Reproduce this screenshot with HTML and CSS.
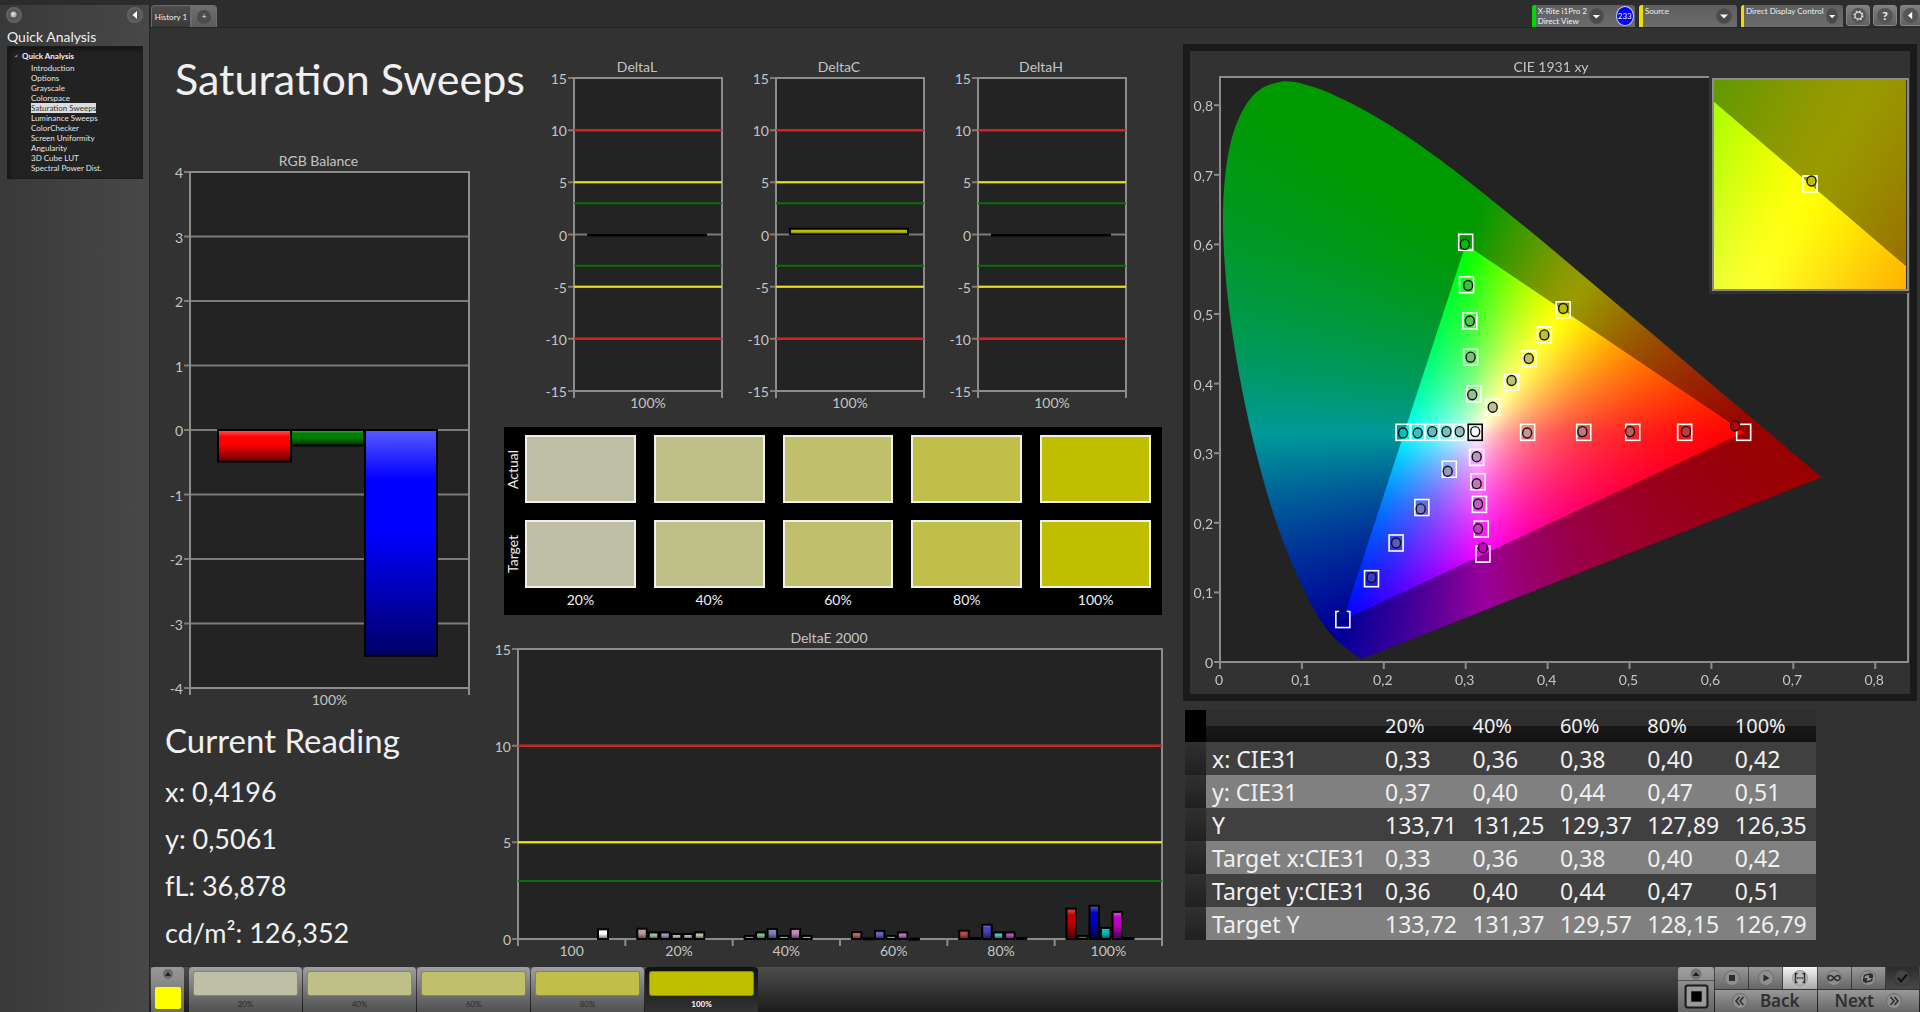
FILE: index.html
```html
<!DOCTYPE html>
<html lang="en">
<head>
<meta charset="utf-8">
<title>Saturation Sweeps</title>
<link rel="stylesheet" href="styles.css">
</head>
<body>
<div class="app">
  <aside class="sidebar">
    <div class="sidebar-tools">
      <button class="knob" aria-label="Pin panel"><svg viewBox="0 0 16 16"><circle cx="7.5" cy="7.5" r="3" fill="#b4b4b4"/><circle cx="7" cy="7" r="1.5" fill="#e0e0e0"/></svg></button>
      <button class="knob" aria-label="Collapse panel"><svg viewBox="0 0 16 16"><path d="M10 4v8L5.500 8z" fill="#fff"/></svg></button>
    </div>
    <h2 class="sidebar-title">Quick Analysis</h2>
    <nav class="tree">
      <div class="tree-root"><svg class="tree-arrow" viewBox="0 0 6 6"><path d="M5 0v5H0z" fill="#777"/></svg>Quick Analysis</div>
      <ul>
        <li><a href="#introduction">Introduction</a></li>
        <li><a href="#options">Options</a></li>
        <li><a href="#grayscale">Grayscale</a></li>
        <li><a href="#colorspace">Colorspace</a></li>
        <li><a href="#saturation" class="current">Saturation Sweeps</a></li>
        <li><a href="#luminance">Luminance Sweeps</a></li>
        <li><a href="#checker">ColorChecker</a></li>
        <li><a href="#uniformity">Screen Uniformity</a></li>
        <li><a href="#angularity">Angularity</a></li>
        <li><a href="#lut">3D Cube LUT</a></li>
        <li><a href="#spectral">Spectral Power Dist.</a></li>
      </ul>
    </nav>
  </aside>

  <div class="main">
    <header class="topbar">
      <div class="tabs">
        <button class="tab">History 1</button>
        <button class="tab tab-add" aria-label="Add history"><span>+</span></button>
      </div>
      <div class="devices">
        <div class="device device-meter">
          <span class="status status-ok"></span>
          <span class="device-name">X-Rite i1Pro 2<br>Direct View</span>
          <button class="knob knob-dark" aria-label="Meter menu"><svg viewBox="0 0 16 16"><path d="M4 6.500h8L8 10.500z" fill="#fff"/></svg></button>
          <span class="counter">233</span>
        </div>
        <div class="device device-source">
          <span class="status"></span>
          <span class="device-name">Source</span>
          <button class="knob knob-dark" aria-label="Source menu"><svg viewBox="0 0 16 16"><path d="M4 6.500h8L8 10.500z" fill="#fff"/></svg></button>
        </div>
        <div class="device device-display">
          <span class="status"></span>
          <span class="device-name">Direct Display Control</span>
          <button class="knob knob-dark" aria-label="Display menu"><svg viewBox="0 0 16 16"><path d="M4 6.500h8L8 10.500z" fill="#fff"/></svg></button>
        </div>
        <button class="tool" aria-label="Settings"><svg viewBox="0 0 20 20"><circle cx="10" cy="10" r="9" fill="#555"/><circle cx="10" cy="10" r="4" fill="none" stroke="#ddd" stroke-width="1.300"/><circle cx="10" cy="10" r="5.200" fill="none" stroke="#ddd" stroke-width="1.600" stroke-dasharray="2 2.080"/></svg></button>
        <button class="tool tool-help" aria-label="Help"><span>?</span></button>
        <button class="tool" aria-label="Back"><svg viewBox="0 0 20 20"><circle cx="10" cy="10" r="9" fill="#555"/><path d="M12 5.500v9L7 10z" fill="#fff"/></svg></button>
      </div>
    </header>

    <main class="content">
      <section class="col-left">
        <h1>Saturation Sweeps</h1>
        <svg class="chart" id="rgb" viewBox="0 0 340 570" role="img" aria-label="RGB Balance"></svg>
        <div class="reading">
          <h2>Current Reading</h2>
          <p>x: 0,4196</p>
          <p>y: 0,5061</p>
          <p>fL: 36,878</p>
          <p>cd/m²: 126,352</p>
        </div>
      </section>

      <section class="col-mid">
        <div class="deltas">
          <svg class="chart" id="deltaL" viewBox="0 0 202 372" role="img" aria-label="DeltaL"></svg>
          <svg class="chart" id="deltaC" viewBox="0 0 202 372" role="img" aria-label="DeltaC"></svg>
          <svg class="chart" id="deltaH" viewBox="0 0 202 372" role="img" aria-label="DeltaH"></svg>
        </div>
        <div class="swatches">
          <div class="swatch-row">
            <span class="swatch-label">Actual</span>
            <div class="swatch-cells"><i class="s20"></i><i class="s40"></i><i class="s60"></i><i class="s80"></i><i class="s100"></i></div>
          </div>
          <div class="swatch-row">
            <span class="swatch-label">Target</span>
            <div class="swatch-cells"><i class="s20"></i><i class="s40"></i><i class="s60"></i><i class="s80"></i><i class="s100"></i></div>
          </div>
          <div class="swatch-names"><span>20%</span><span>40%</span><span>60%</span><span>80%</span><span>100%</span></div>
        </div>
        <svg class="chart" id="deltaE" viewBox="0 0 673 352" role="img" aria-label="DeltaE 2000"></svg>
      </section>

      <section class="col-right">
        <div class="cie">
          <canvas id="gamut" width="720" height="643"></canvas>
          <svg class="chart" id="cie" viewBox="0 0 720 643" role="img" aria-label="CIE 1931 xy"></svg>
        </div>
        <table class="data">
          <colgroup><col class="c-pick"><col class="c-name"><col><col><col><col><col></colgroup>
          <thead><tr><th></th><th></th><th>20%</th><th>40%</th><th>60%</th><th>80%</th><th>100%</th></tr></thead>
          <tbody>
            <tr><td></td><th>x: CIE31</th><td>0,33</td><td>0,36</td><td>0,38</td><td>0,40</td><td>0,42</td></tr>
            <tr><td></td><th>y: CIE31</th><td>0,37</td><td>0,40</td><td>0,44</td><td>0,47</td><td>0,51</td></tr>
            <tr><td></td><th>Y</th><td>133,71</td><td>131,25</td><td>129,37</td><td>127,89</td><td>126,35</td></tr>
            <tr><td></td><th>Target x:CIE31</th><td>0,33</td><td>0,36</td><td>0,38</td><td>0,40</td><td>0,42</td></tr>
            <tr><td></td><th>Target y:CIE31</th><td>0,36</td><td>0,40</td><td>0,44</td><td>0,47</td><td>0,51</td></tr>
            <tr><td></td><th>Target Y</th><td>133,72</td><td>131,37</td><td>129,57</td><td>128,15</td><td>126,79</td></tr>
          </tbody>
        </table>
      </section>
    </main>

    <footer class="bottombar">
      <button class="picker" aria-label="Pattern colour">
        <svg viewBox="0 0 12 12"><circle cx="6" cy="6" r="5" fill="#6a6a6a"/><path d="M3 8h6L6 4z" fill="#222"/></svg>
        <span class="picker-color"></span>
      </button>
      <div class="steps">
        <button class="step"><i class="s20"></i><span>20%</span></button>
        <button class="step"><i class="s40"></i><span>40%</span></button>
        <button class="step"><i class="s60"></i><span>60%</span></button>
        <button class="step"><i class="s80"></i><span>80%</span></button>
        <button class="step step-active"><i class="s100"></i><span>100%</span></button>
      </div>
      <div class="transport">
        <div class="pattern">
          <button class="pattern-up" aria-label="Show patterns"><svg viewBox="0 0 14 12"><circle cx="7" cy="6" r="5.500" fill="#747474"/><path d="M3.500 8h7L7 4z" fill="#222"/></svg></button>
          <button class="pattern-window" aria-label="Pattern window"><svg viewBox="0 0 24 24"><rect x="1.500" y="1.500" width="21" height="21" rx="2" fill="#999" stroke="#1c1c1c" stroke-width="2"/><path d="M7 7h10v10H7z" fill="#000"/></svg></button>
        </div>
        <div class="controls">
          <div class="control-row">
            <button aria-label="Stop"><svg viewBox="0 0 16 16"><circle cx="8" cy="8" r="7.500"/><path d="M5 5h6v6H5z"/></svg></button>
            <button aria-label="Play"><svg viewBox="0 0 16 16"><circle cx="8" cy="8" r="7.500"/><path d="M5.500 4.500v7l6-3.500z"/></svg></button>
            <button class="lit" aria-label="Measure series"><svg viewBox="0 0 16 16"><circle cx="8" cy="8" r="7.500"/><path class="line" d="M5.500 3.500h-2v9h2M10.500 3.500h2v9h-2M5 8h1.500M7.300 8h1.400M9.500 8H11"/></svg></button>
            <button aria-label="Continuous"><svg viewBox="0 0 16 16"><circle cx="8" cy="8" r="7.500"/><path class="line" d="M8 8C6.500 6 5.500 5.500 4.500 5.500a2.500 2.500 0 0 0 0 5C5.500 10.500 6.500 10 8 8s2.500-2.500 3.500-2.500a2.500 2.500 0 0 1 0 5C10.500 10.500 9.500 10 8 8z"/></svg></button>
            <button aria-label="Repeat"><svg viewBox="0 0 16 16"><circle cx="8" cy="8" r="7.500"/><path class="line" d="M4 7.500C4 5.500 5.500 4.500 8 4.500h2.500M12 8.500c0 2-1.500 3-4 3H5.500"/><path d="M9.500 2.500 13 4.500v3.500H9zM6.500 13.500 3 11.500V8h4z"/></svg></button>
            <button class="dim" aria-label="Accept"><svg viewBox="0 0 16 16"><circle cx="8" cy="8" r="7.500"/><path class="check" d="M4 8l3 3.500 6-7"/></svg></button>
          </div>
          <div class="control-row nav-row">
            <button><svg viewBox="0 0 16 16"><circle cx="8" cy="8" r="7.500"/><path class="line" d="M7.500 4l-3.500 4 3.500 4M11.500 4L8 8l3.500 4"/></svg>Back</button>
            <button>Next<svg viewBox="0 0 16 16"><circle cx="8" cy="8" r="7.500"/><path class="line" d="M4.500 4L8 8l-3.500 4M8.500 4L12 8l-3.500 4"/></svg></button>
          </div>
        </div>
      </div>
    </footer>
  </div>
</div>
<script src="charts.js"></script>
</body>
</html>
```
FILE: styles.css
```css
* { box-sizing: border-box; }
body {
  margin: 0;
  background: #323232;
  color: #f0f0f0;
  font-family: Lato, "Noto Sans", sans-serif;
  font-size: 14px;
}
button {
  margin: 0;
  padding: 0;
  border: 0;
  background: none;
  color: inherit;
  font: inherit;
}
h1, h2, p, ul { margin: 0; padding: 0; font-weight: 400; }

.app {
  display: grid;
  grid-template-columns: 150px minmax(0, 1fr);
  min-height: 100vh;
}

/* Sidebar */
.sidebar {
  border-top: 5px solid #2c2c2c;
  border-right: 1px solid #252525;
  background: linear-gradient(90deg, #393939, #484848);
}
.sidebar-tools {
  display: flex;
  justify-content: space-between;
  padding: 2px 6px 0;
}
.knob {
  width: 16px;
  height: 16px;
  border-radius: 50%;
  background: radial-gradient(#555 40%, #777);
}
.knob svg { display: block; }
.knob-dark { background: radial-gradient(#4a4a4a 50%, #606060); }
.sidebar-title {
  padding: 5px 7px 0;
  font-size: 14px;
  line-height: 18px;
}
.tree {
  margin: 0 6px 0 7px;
  padding: 4px 0 5px;
  border: 1px solid #1b1b1b;
  background: #222;
  box-shadow: inset 2px 3px 4px #161616;
  font-size: 8px;
  line-height: 10px;
}
.tree-root {
  display: flex;
  align-items: center;
  gap: 4px;
  padding-left: 6px;
  margin-bottom: 2px;
  font-weight: 700;
}
.tree-arrow { width: 4px; height: 4px; }
.tree ul { padding-left: 23px; list-style: none; }
.tree li { height: 10px; }
.tree a { display: inline-block; color: #e4e4e4; text-decoration: none; }
.tree a.current { background: #ddd; color: #333; }

/* Top bar */
.main { display: flex; flex-direction: column; min-width: 0; }
.topbar {
  display: flex;
  justify-content: space-between;
  height: 27px;
  padding: 5px 0 0 1px;
  background: #2d2d2d;
}
.tabs { display: flex; }
.tab {
  width: 40px;
  border: 1px solid #6c6c6c;
  border-bottom: 0;
  border-radius: 4px 0 0 0;
  background: linear-gradient(#4d4d4d, #3a3a3a);
  font-size: 8px;
  white-space: nowrap;
}
.tab-add {
  width: 26px;
  border-radius: 0 4px 0 0;
  background: linear-gradient(#707070, #5c5c5c);
}
.tab-add span {
  display: inline-block;
  width: 14px;
  height: 14px;
  border-radius: 50%;
  background: #4c4c4c;
  line-height: 13px;
}
.devices { display: flex; gap: 3px; }
.device {
  display: flex;
  align-items: center;
  gap: 2px;
  padding-right: 5px;
  border-radius: 3px 3px 0 0;
  background: linear-gradient(#5e5e5e, #6c6c6c);
  font-size: 8px;
  line-height: 10px;
  white-space: nowrap;
}
.device-name { align-self: flex-start; flex: 1; padding-top: 1px; }
.device-meter { width: 103px; padding-right: 1px; margin-right: 1px; }
.device-source { width: 98px; margin-right: 1px; }
.device-display { width: 102px; }
.status { align-self: stretch; width: 4px; border-radius: 3px 0 0 0; background: #e8e000; }
.status-ok { background: #00d800; }
.counter {
  width: 20px;
  height: 20px;
  margin-left: 10px;
  border: 1px solid #c8c8ff;
  border-radius: 50%;
  background: #00f;
  line-height: 18px;
  text-align: center;
}
.tool {
  width: 24px;
  height: 21px;
  border: 1px solid #858585;
  border-radius: 3px;
  background: linear-gradient(#808080, #606060);
}
.tool svg { display: block; width: 17px; margin: auto; }
.tool span { display: block; width: 16px; height: 16px; margin: auto; border-radius: 50%; background: #555; font-size: 12px; font-weight: 900; line-height: 16px; }
.tool:last-child { width: 20px; border-right: 0; border-radius: 3px 0 0 3px; }

/* Content */
.content {
  flex: 1;
  display: grid;
  grid-template-columns: minmax(0, 340fr) minmax(0, 673fr) minmax(0, 754fr);
  padding-right: 3px;
  border-top: 1px solid #262626;
}
.chart { display: block; width: 100%; }
.chart text { fill: #c4c4c4; font-size: 14px; }
.axis { stroke: #8c8c8c; stroke-width: 2; fill: none; }
.grid { stroke: #7c7c7c; stroke-width: 2; }
.plot { fill: #232323; }

.col-left h1 {
  padding: 22px 0 0 25px;
  font-size: 43px;
  line-height: 58px;
  height: 122px;
  white-space: nowrap;
}
.reading { margin-top: -8px; padding-left: 15px; }
.reading h2 { font-size: 33px; line-height: 56px; white-space: nowrap; }
.reading p { font-size: 27px; line-height: 47px; }

.deltas {
  display: grid;
  grid-template-columns: repeat(3, 1fr);
  padding: 27px 23px 0 44px;
}
.swatches {
  margin: 0 1px 0 14px;
  padding: 8px 11px 0 0;
  background: #000;
}
.swatch-row { display: flex; height: 68px; margin-bottom: 17px; }
.swatch-label {
  width: 18px;
  margin-right: 3px;
  writing-mode: vertical-rl;
  transform: rotate(180deg);
  text-align: center;
  line-height: 18px;
}
.swatch-cells, .swatch-names { display: grid; grid-template-columns: repeat(5, 1fr); column-gap: 18px; }
.swatch-cells { flex: 1; }
.swatch-cells i { border: 2px solid #f0f0e8; }
.swatch-names { margin: -14px 0 0 21px; padding-bottom: 7px; text-align: center; line-height: 17px; }
.s20 { background: #bfbfa5; }
.s40 { background: #bfbf88; }
.s60 { background: #bfbf6c; }
.s80 { background: #bfbf4a; }
.s100 { background: #bfbf00; }

.col-right { padding: 16px 0 0 20px; }
.cie { display: grid; border: 7px solid #1a1a1a; background: #323232; }
.cie canvas, .cie svg { grid-area: 1 / 1; display: block; width: 100%; }
.data {
  width: 86%;
  margin: 9px 0 0 2px;
  border-collapse: collapse;
  table-layout: fixed;
  font-family: "Noto Sans", sans-serif;
  font-size: 23px;
}
.c-pick { width: 21px; }
.c-name { width: 173px; }
.data th, .data td { height: 33px; padding: 0 0 0 6px; font-weight: 400; text-align: left; line-height: 30px; white-space: nowrap; }
.data thead th { height: 32px; background: linear-gradient(#2e2e2e 50%, #191919 50%, #121212); font-size: 20px; }
.data thead th:first-child { background: #000; }
.data tbody tr { background: #404040; }
.data tbody tr:nth-child(even) { background: #808080; }
.data tbody td:first-child { background: linear-gradient(#303030, #202020); }

/* Bottom bar */
.bottombar {
  display: flex;
  height: 45px;
  padding-left: 1px;
  background: linear-gradient(#4c4c4c, #3a3a3a 40%, #1c1c1c);
}
.picker {
  display: flex;
  flex-direction: column;
  align-items: center;
  justify-content: space-between;
  width: 33px;
  margin-right: 5px;
  padding: 1px 0 3px;
  border-radius: 3px 3px 0 0;
  background: linear-gradient(#989898, #6c6c6c);
}
.picker svg { width: 12px; }
.picker-color { width: 26px; height: 22px; border-radius: 2px; background: #ff0; }
.steps { display: flex; gap: 1px; }
.step {
  display: flex;
  flex-direction: column;
  width: 113px;
  padding: 4px 4px 0;
  border-radius: 4px 4px 0 0;
  background: linear-gradient(#a0a0a0, #505050);
  color: #2a2a2a;
  font-size: 8px;
  line-height: 16px;
}
.step i { height: 27px; border: 1px solid rgba(60, 60, 0, .4); border-radius: 3px; }
.step-active { background: linear-gradient(#111, #333); color: #fff; font-weight: 700; }
.transport { display: flex; gap: 1px; margin-left: auto; padding-right: 1px; }
.pattern { display: flex; flex-direction: column; width: 36px; background: linear-gradient(#a0a0a0, #666); border-radius: 3px 3px 0 0; }
.pattern-up { height: 14px; border-bottom: 1px solid #555; }
.pattern-up svg { display: block; width: 14px; margin: auto; }
.pattern-window { flex: 1; }
.pattern-window svg { display: block; width: 25px; margin: auto; }
.controls { display: flex; flex-direction: column; gap: 1px; width: 204px; }
.control-row { display: grid; grid-template-columns: repeat(6, 1fr); gap: 1px; height: 22px; }
.control-row button {
  display: flex;
  align-items: center;
  justify-content: center;
  background: linear-gradient(#999, #666);
  color: #303030;
}
.control-row svg { width: 16px; height: 16px; fill: #2c2c2c; }
.control-row circle { fill: #8f8f8f; stroke: #6e6e6e; }
.control-row .line, .control-row .check { fill: none; stroke: #2c2c2c; stroke-width: 1.500px; }
.control-row .check { stroke: #111; stroke-width: 2px; }
.control-row .lit { background: linear-gradient(#f4f4f4, #aaa); }
.control-row .lit circle { fill: #bbb; stroke: #999; }
.control-row .dim { background: linear-gradient(#2c2c2c, #484848); }
.control-row .dim circle { fill: #444; stroke: #3a3a3a; }
.nav-row { grid-template-columns: 1fr 1fr; }
.control-row.nav-row button { gap: 12px; font: 600 17px/22px "Noto Sans", sans-serif; }
```
FILE: charts.js
```js
const NS = 'http://www.w3.org/2000/svg';

function add(parent, tag, attrs, text) {
  const el = document.createElementNS(NS, tag);
  for (const k in attrs) el.setAttribute(k, attrs[k]);
  if (text !== undefined) el.textContent = text;
  parent.appendChild(el);
  return el;
}

// Vertical sheen laid over every bar.
function addSheen(svg) {
  const g = add(add(svg, 'defs', {}), 'linearGradient', { id: svg.id + '-sheen', x1: 0, y1: 0, x2: 0, y2: 1 });
  [[0, '#fff', .35], [.22, '#fff', 0], [.45, '#000', 0], [1, '#000', .6]].forEach(([o, c, a]) =>
    add(g, 'stop', { offset: o, 'stop-color': c, 'stop-opacity': a }));
}

function chart(id, o) {
  const svg = document.getElementById(id);
  const { x, y, w, h } = o.plot;
  const sy = v => y + (o.max - v) / (o.max - o.min) * h;
  addSheen(svg);
  add(svg, 'rect', { class: 'plot', x, y, width: w, height: h });
  add(svg, 'text', { x: x + w / 2 - 11, y: y - 6, 'text-anchor': 'middle' }, o.title);
  for (let v = o.min; v <= o.max; v += o.step) {
    add(svg, 'line', { class: 'grid', x1: x - 6, x2: x + w, y1: sy(v), y2: sy(v) });
    add(svg, 'text', { x: x - 7, y: sy(v) + 6, 'text-anchor': 'end' }, v);
  }
  add(svg, 'rect', { class: 'axis', x, y, width: w, height: h });
  const cw = w / o.groups.length;
  o.groups.forEach((name, i) =>
    add(svg, 'text', { x: x + cw * (i + .5), y: y + h + 17, 'text-anchor': 'middle' }, name));
  for (let i = 0; i <= o.groups.length; i++)
    add(svg, 'line', { class: 'axis', x1: x + cw * i, x2: x + cw * i, y1: y + h, y2: y + h + 7 });
  (o.limits || []).forEach(([v, c]) =>
    add(svg, 'line', { x1: x, x2: x + w, y1: sy(v), y2: sy(v), stroke: c, 'stroke-width': 2 }));
  o.bars.forEach(([bx, bw, v, c]) => {
    const top = Math.min(sy(v), sy(0)), height = Math.max(Math.abs(sy(v) - sy(0)), 1);
    const box = { x: x + bx, y: top, width: bw, height };
    add(svg, 'rect', { ...box, fill: c });
    add(svg, 'rect', { ...box, fill: `url(#${id}-sheen)`, stroke: '#000', 'stroke-width': 2 });
  });
}

chart('rgb', {
  title: 'RGB Balance', plot: { x: 40, y: 22, w: 279, h: 516 }, min: -4, max: 4, step: 1, groups: ['100%'],
  bars: [[28, 73, -.49, '#f00'], [101, 73, -.24, '#008000'], [175, 72, -3.5, '#00f']]
});

const limits = [[10, '#d02020'], [5, '#e6e020'], [3, '#0a700a'], [-3, '#0a700a'], [-5, '#e6e020'], [-10, '#d02020']];
[['L', -.1, '#000'], ['C', .55, '#bfbf00'], ['H', -.1, '#000']].forEach(([k, v, c]) =>
  chart('delta' + k, {
    title: 'Delta' + k, plot: { x: 40, y: 23, w: 148, h: 313 }, min: -15, max: 15, step: 5, groups: ['100%'],
    limits, bars: [[14, 118, v, c]]
  }));

// Colour of a sweep step: full channels at 191, the others at the step's floor.
const floors = [165, 136, 108, 74, 0];
const sweep = (mask, i, low = floors[i]) => `rgb(${mask.map(m => m ? 191 : low).join()})`;
const hues = [[1, 0, 0], [0, 1, 0], [0, 0, 1], [0, 1, 1], [1, 0, 1], [1, 1, 0]];
const errors = [
  [.53, .34, .34, .26, .26, .34],
  [.16, .34, .52, .16, .52, .16],
  [.36, .04, .42, .16, .34, .02],
  [.43, .05, .74, .34, .34, .05],
  [1.57, .16, 1.72, .57, 1.4, .05]
];
const errorBars = [[80, 10, .5, '#fff']];
errors.forEach((row, g) => row.forEach((v, i) => {
  const low = [138, 112, 84, 54, 8][g];
  errorBars.push([(g + 1) * 107.3 + 12 + i * 11.5, 9.5, v, g < 4 && i < 3 ? sweep(hues[i], g, low + 14) : sweep(hues[i], g)]);
}));
chart('deltaE', {
  title: 'DeltaE 2000', plot: { x: 28, y: 34, w: 644, h: 290 }, min: 0, max: 15, step: 5,
  groups: ['100', '20%', '40%', '60%', '80%', '100%'],
  limits: [[10, '#f01010'], [5, '#f0f000'], [3, '#0a700a']], bars: errorBars
});

// CIE 1931 chromaticity diagram
const px = x => 30 + x * 819, py = y => 611 - y * 696;
const locus = [[.1741, .005], [.1714, .0051], [.1644, .0109], [.1566, .0177], [.144, .0297], [.1355, .0399], [.1241, .0578],
  [.1096, .0868], [.0913, .1327], [.0687, .2007], [.0454, .295], [.0235, .4127], [.0082, .5384], [.0039, .6548], [.0139, .7502],
  [.0389, .812], [.0743, .8338], [.1142, .8262], [.1547, .8059], [.1929, .7816], [.2296, .7543], [.2658, .7243], [.3016, .6923],
  [.3731, .6245], [.4441, .5547], [.5125, .4866], [.5752, .4242], [.627, .3725], [.6658, .334], [.6915, .3083], [.719, .2809], [.7347, .2653]];
const primaries = [[.64, .33], [.3, .6], [.15, .06]];

// Saturation ramps linearly; hue does too, but more softly between red and green.
function colorField(w, h, toXY, dim) {
  const c = document.createElement('canvas');
  c.width = w; c.height = h;
  const ctx = c.getContext('2d'), img = ctx.createImageData(w, h);
  for (let j = 0; j < h; j++) for (let i = 0; i < w; i++) {
    const [x, y] = toXY(i, j), z = 1 - x - y;
    const rgb = [3.2406 * x - 1.5372 * y - .4986 * z, -.9689 * x + 1.8758 * y + .0415 * z, .0557 * x - .204 * y + 1.057 * z]
      .map(v => Math.max(v, 0));
    const hi = Math.max(...rgb), lo = Math.min(...rgb), base = lo / hi, k = (j * w + i) * 4;
    const soft = rgb[2] === lo ? 1.6 : 1.1;
    for (let n = 0; n < 3; n++) {
      const t = hi > lo ? (rgb[n] - lo) / (hi - lo) : 1;
      img.data[k + n] = 255 * dim * (base + (1 - base) * (1 - Math.pow(1 - t, soft)));
    }
    img.data[k + 3] = 255;
  }
  ctx.putImageData(img, 0, 0);
  return c;
}

function clipped(ctx, path, image, x, y) {
  ctx.save();
  ctx.clip(path);
  ctx.drawImage(image, x, y);
  ctx.restore();
}

function polygon(points) {
  const p = new Path2D();
  points.forEach(([x, y], i) => i ? p.lineTo(x, y) : p.moveTo(x, y));
  p.closePath();
  return p;
}

const ctx = document.getElementById('gamut').getContext('2d');
ctx.fillStyle = '#232323';
ctx.fillRect(30, 26, 688, 585);
const pts = locus.map(([x, y]) => [px(x), py(y)]);
const shoe = new Path2D();
shoe.moveTo(...pts[0]);
for (let i = 0; i < pts.length - 1; i++) {
  const a = pts[Math.max(i - 1, 0)], b = pts[i], c = pts[i + 1], d = pts[Math.min(i + 2, pts.length - 1)];
  shoe.bezierCurveTo(b[0] + (c[0] - a[0]) / 6, b[1] + (c[1] - a[1]) / 6, c[0] - (d[0] - b[0]) / 6, c[1] - (d[1] - b[1]) / 6, c[0], c[1]);
}
shoe.closePath();
const toXY = (i, j) => [(i - 30) / 819, (611 - j) / 696];
clipped(ctx, shoe, colorField(720, 643, toXY, .6), 0, 0);
clipped(ctx, polygon(primaries.map(([x, y]) => [px(x), py(y)])), colorField(720, 643, toXY, 1), 0, 0);

const cie = document.getElementById('cie');
add(cie, 'text', { x: 361, y: 21, 'text-anchor': 'middle' }, 'CIE 1931 xy');
add(cie, 'rect', { class: 'axis', x: 30, y: 26, width: 688, height: 585 });
for (let i = 0; i <= 8; i++) {
  const v = i / 10, label = i ? '0,' + i : '0';
  add(cie, 'line', { class: 'axis', x1: px(v), x2: px(v), y1: 611, y2: 618 });
  add(cie, 'text', { x: px(v) - 1, y: 634, 'text-anchor': 'middle' }, label);
  add(cie, 'line', { class: 'axis', x1: 24, x2: 30, y1: py(v), y2: py(v) });
  add(cie, 'text', { x: 23, y: py(v) + 6, 'text-anchor': 'end' }, label);
}

function marker(sx, sy, cx, cy, fill, stroke = '#fff') {
  add(cie, 'rect', { x: sx - 7, y: sy - 8, width: 14, height: 16, fill: 'none', stroke, 'stroke-width': 1.6 });
  add(cie, 'ellipse', { cx, cy, rx: 4.5, ry: 5, fill, stroke: '#111', 'stroke-width': 1.4 });
}
// Target x, target y, measured x, measured y for each step
const sweeps = [
  [[1, 0, 0], [[.3756, .33, .375, .329], [.4441, .33, .4424, .331], [.504, .33, .5006, .331], [.5674, .33, .569, .331], [.6394, .33, .629, .339]]],
  [[0, 1, 0], [[.31, .385, .308, .384], [.306, .438, .306, .438], [.305, .49, .305, .49], [.301, .542, .303, .541], [.3, .603, .299, .6]]],
  [[0, 0, 1], [[.28, .277, .278, .274], [.2465, .222, .245, .22], [.215, .171, .215, .171], [.185, .1197, .185, .1215], [.15, .061, .15, .0675]]],
  [[0, 1, 1], [[.2926, .33, .2926, .331], [.2765, .33, .2765, .331], [.2592, .33, .2592, .331], [.2414, .33, .2414, .329], [.2235, .33, .2235, .329]]],
  [[1, 0, 1], [[.3134, .294, .3134, .295], [.3151, .259, .3134, .256], [.3168, .2265, .3151, .227], [.319, .191, .3151, .1915], [.321, .155, .321, .164]]],
  [[1, 1, 0], [[.333, .366, .333, .366], [.356, .402, .356, .4045], [.377, .436, .377, .436], [.396, .47, .396, .47], [.419, .506, .419, .508]]]
];
sweeps.forEach(([mask, list]) => list.forEach(([a, b, c, d], i) =>
  marker(px(a), py(b), px(c), py(d), sweep(mask, i, [150, 120, 92, 60, 0][i]))));
marker(px(.3116), py(.33), px(.3116), py(.331), '#fff', '#000');

// Magnified view round the selected point
const inset = { x: 523, y: 28, w: 195, h: 211 };
const insetXY = (i, j) => [.4193 + (i - 97) / 2000, .5053 - (j - 105) / 2154];
ctx.fillStyle = '#323232';
ctx.fillRect(519, 24, 201, 219);
ctx.drawImage(colorField(inset.w, inset.h, insetXY, .6), inset.x, inset.y);
const ix = x => inset.x + 97 + (x - .4193) * 2000, iy = y => inset.y + 105 - (y - .5053) * 2154;
const view = polygon([[inset.x, inset.y], [inset.x + inset.w, inset.y], [inset.x + inset.w, inset.y + inset.h], [inset.x, inset.y + inset.h]]);
ctx.save();
ctx.clip(view);
clipped(ctx, polygon(primaries.map(([x, y]) => [ix(x), iy(y)])), colorField(inset.w, inset.h, insetXY, 1), inset.x, inset.y);
ctx.restore();
add(cie, 'path', { d: 'M519 26H720M718 24V242', stroke: '#323232', 'stroke-width': 4 });
add(cie, 'rect', { class: 'axis', x: inset.x, y: inset.y, width: inset.w, height: inset.h });
marker(620, 133, 621.5, 130, '#bfbf00');
```
